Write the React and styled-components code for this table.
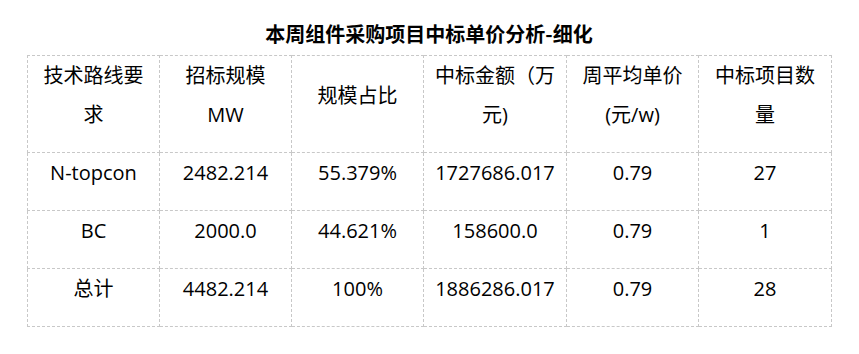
import React from "react";
import styled, { createGlobalStyle } from "styled-components";

const Global = createGlobalStyle`
  html, body { margin: 0; padding: 0; background: #fff; }
  body { font-family: "Open Sans", "Noto Sans CJK SC", sans-serif; color: #000; }
`;

const Page = styled.div`
  width: 859px;
  height: 354px;
  box-sizing: border-box;
  padding: 20px 0 0 27px;
  display: flex;
  flex-direction: column;
  align-items: flex-start;
`;

const Title = styled.h2`
  margin: 0 0 7px;
  width: 804px;
  text-align: center;
  font-family: "Noto Sans CJK SC", sans-serif;
  font-size: 20px;
  line-height: 28px;
  font-weight: 700;
`;

const Table = styled.table`
  border-collapse: collapse;
  table-layout: fixed;
  width: 804px;
`;

const Cell = styled.td`
  border: 1px dashed #c8c8c8;
  padding: 0 0 18px;
  text-align: center;
  vertical-align: middle;
  font-size: 20px;
  line-height: 39px;
  color: #000;
  word-break: break-all;
`;

const headerLines = [
  ["技术路线要", "求"],
  ["招标规模", "MW"],
  ["规模占比"],
  ["中标金额（万", "元)"],
  ["周平均单价", "(元/w)"],
  ["中标项目数", "量"],
];
const rows = [
  ["N-topcon", "2482.214", "55.379%", "1727686.017", "0.79", "27"],
  ["BC", "2000.0", "44.621%", "158600.0", "0.79", "1"],
  ["总计", "4482.214", "100%", "1886286.017", "0.79", "28"],
];
const widths = [132, 132, 132, 143, 132, 133];

export default function App() {
  return (
    <>
      <Global />
      <Page>
        <Title>本周组件采购项目中标单价分析-细化</Title>
        <Table>
          <colgroup>
            {widths.map((w, i) => (
              <col key={i} style={{ width: w }} />
            ))}
          </colgroup>
          <tbody>
            <tr>
              {headerLines.map((lines, i) => (
                <Cell key={i}>
                  {lines.map((l, j) => (
                    <React.Fragment key={j}>
                      {j > 0 && <br />}
                      {l}
                    </React.Fragment>
                  ))}
                </Cell>
              ))}
            </tr>
            {rows.map((r, i) => (
              <tr key={i}>
                {r.map((c, j) => (
                  <Cell key={j}>{c}</Cell>
                ))}
              </tr>
            ))}
          </tbody>
        </Table>
      </Page>
    </>
  );
}
